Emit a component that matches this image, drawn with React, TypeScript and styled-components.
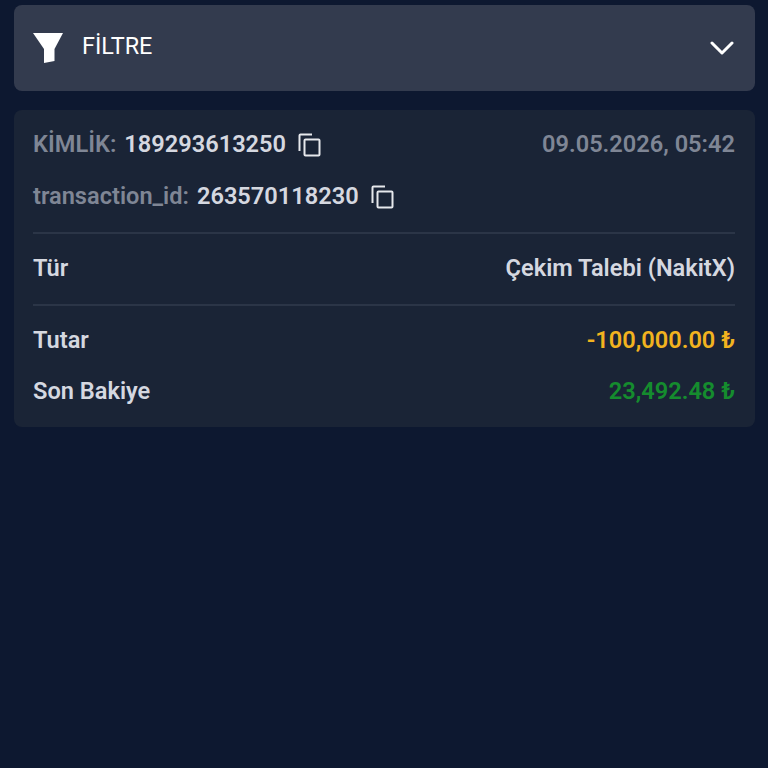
import React from 'react';
import styled, { createGlobalStyle } from 'styled-components';

const Global = createGlobalStyle`
  html, body { margin: 0; padding: 0; background: #0d1830; }
  body { font-family: Roboto, "Liberation Sans", sans-serif; }
`;
const Page = styled.div`
  width: 768px; height: 768px; box-sizing: border-box; padding: 5px 13px 0 14px;
  background: #0d1830; display: flex; flex-direction: column; gap: 19px; overflow: hidden;
`;
const FilterBar = styled.div`
  height: 86px; border-radius: 8px; background: #333b4e; display: flex; align-items: center;
  padding: 0 21px 0 19px; color: #fff;
`;
const FilterLabel = styled.span`font-size: 23.4px; margin: -5px 0 0 19px; flex: 1;`;
const Card = styled.div`
  background: #1a2436; border-radius: 8px; padding: 9px 20px 19px 19px; display: flex; flex-direction: column;
`;
const Row = styled.div<{ $h: number }>`
  height: ${p => p.$h}px; display: flex; align-items: center; justify-content: space-between;
  font-size: 23.6px; font-weight: 600; color: #d5d8e0;
`;
const Group = styled.div`display: flex; align-items: center; gap: 8px;`;
const Muted = styled.span`color: #7f8695;`;
const Amount = styled.span<{ $c: string }>`color: ${p => p.$c};`;
const Divider = styled.div<{ $top: number }>`height: 2px; margin-top: ${p => p.$top}px; background: #2b3547;`;
const CopyIcon = styled.svg`margin-left: 3px; margin-top: 2px; flex: none;`;
const FunnelIcon = styled.svg`flex: none;`;
const Chevron = styled.svg`flex: none;`;

const Copy = () => (
  <CopyIcon width="24" height="24" viewBox="0 0 24 24" fill="none" stroke="#e6e8ec" strokeWidth="2">
    <path d="M2.500 18V2.500a1 1 0 0 1 1-1h11.500" />
    <rect x="7.500" y="6.500" width="15" height="16" rx="1" />
  </CopyIcon>
);

export default function App() {
  return (
    <Page>
      <Global />
      <FilterBar>
        <FunnelIcon width="30" height="30" viewBox="0 0 30 30" fill="#fff">
          <path d="M0 0H30L21.500 16V28L11 30V16z" />
        </FunnelIcon>
        <FilterLabel>FİLTRE</FilterLabel>
        <Chevron width="24" height="14" viewBox="0 0 24 14" fill="none" stroke="#fff" strokeWidth="3" strokeLinecap="round" strokeLinejoin="round">
          <path d="M2 2l10 10L22 2" />
        </Chevron>
      </FilterBar>
      <Card>
        <Row $h={50}>
          <Group><Muted>KİMLİK:</Muted><span>189293613250</span><Copy /></Group>
          <Muted>09.05.2026, 05:42</Muted>
        </Row>
        <Row $h={53}>
          <Group><Muted>transaction_id:</Muted><span>263570118230</span><Copy /></Group>
        </Row>
        <Divider $top={10} />
        <Row $h={68}><span>Tür</span><span>Çekim Talebi (NakitX)</span></Row>
        <Divider $top={2} />
        <Row $h={67}><span>Tutar</span><Amount $c="#f2b31f">-100,000.00 ₺</Amount></Row>
        <Row $h={35}><span>Son Bakiye</span><Amount $c="#158c2e">23,492.48 ₺</Amount></Row>
      </Card>
    </Page>
  );
}
